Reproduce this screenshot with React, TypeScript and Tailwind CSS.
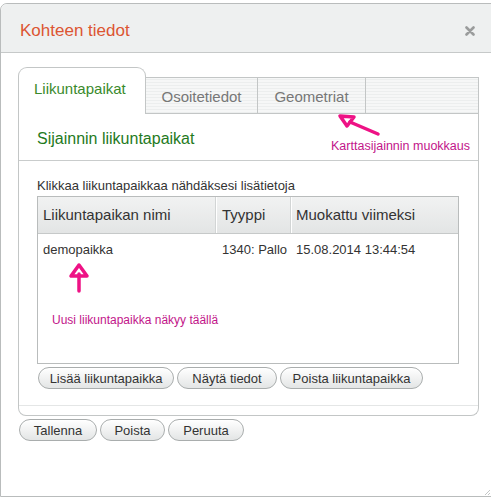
const FONT = "font-['Liberation_Sans',Arial,sans-serif]"

function PillButton({ label, width }: { label: string; width: string }) {
  return (
    <button
      className={`${width} h-[22px] rounded-full border border-[#a9adad] bg-[linear-gradient(#ffffff,#e3e5e5)] text-[13px] leading-none text-[#333] shadow-[inset_0_1px_0_#fff]`}
    >
      {label}
    </button>
  )
}

/** Merkintänuolet kuvakaappauksen päällä (käsin piirretty, magenta). */
function UpArrow() {
  return (
    <svg width="26" height="32" viewBox="0 0 26 32" className="absolute left-[28px] top-[65px]" aria-hidden="true">
      <path d="M13 29 L13 12" stroke="#ee1285" strokeWidth="3.5" strokeLinecap="round" />
      <path d="M13 3 L5 14 L21 14 Z" fill="none" stroke="#ee1285" strokeWidth="3.5" strokeLinejoin="round" />
    </svg>
  )
}

function TabArrow() {
  return (
    <svg width="48" height="26" viewBox="0 0 48 26" className="absolute left-[334px] top-[112px]" aria-hidden="true">
      <path d="M44 22 L16 10" stroke="#ee1285" strokeWidth="3.5" strokeLinecap="round" />
      <path d="M6 4 L20 5 L13 14 Z" fill="none" stroke="#ee1285" strokeWidth="3.5" strokeLinejoin="round" />
    </svg>
  )
}

export default function App() {
  return (
    <div className={`relative h-[497px] w-[491px] overflow-hidden bg-white ${FONT}`}>
      <div className="mt-[3px] h-[494px] w-[500px] rounded-tl-[7px] border border-[#b9bcbc] bg-white">
        {/* Otsikkopalkki */}
        <div className="flex h-[49px] w-[491px] items-center justify-between rounded-tl-[7px] border-b border-[#c6c9c9] bg-[#eef0f0] pl-[19px] pr-[17px] pt-[5px]">
          <span className="text-[17px] text-[#dc5532]">Kohteen tiedot</span>
          <svg width="10" height="10" viewBox="0 0 10 10" aria-hidden="true">
            <path d="M1.5 1.5 L8.5 8.5 M8.5 1.5 L1.5 8.5" stroke="#9a9c9c" strokeWidth="2.6" strokeLinecap="round" />
          </svg>
        </div>

        <div className="pl-[17px] pt-[14px]">
          <div className="w-[461px]">
            {/* Välilehdet */}
            <div className="flex items-end">
              <div className="flex h-[47px] w-[128px] items-center rounded-t-[9px] border-x border-t border-[#c3c6c6] bg-white pb-[4px] pl-[15px] text-[15px] text-[#3a8a2c]">
                Liikuntapaikat
              </div>
              <div className="flex h-[37px] flex-1 border-y border-r border-[#c3c6c6] bg-[repeating-linear-gradient(0deg,#eceeee_0px,#eceeee_1px,#f6f7f7_1px,#f6f7f7_3px)] text-[15px] text-[#777]">
                <div className="flex w-[112px] items-center justify-center border-r border-[#c3c6c6] pt-[3px]">Osoitetiedot</div>
                <div className="flex w-[108px] items-center justify-center border-r border-[#c3c6c6] pt-[3px]">Geometriat</div>
                <div className="flex-1" />
              </div>
            </div>

            {/* Sisältö */}
            <div className="rounded-b-[8px] border-x border-b border-[#c3c6c6]">
              <div className="flex h-[47px] items-center justify-between border-b border-[#c9cccc] pl-[18px] pr-[8px] pt-[3px]">
                <span className="text-[16px] text-[#1f7a22]">Sijainnin liikuntapaikat</span>
                <span className="mt-[16px] text-[12.5px] text-[#c2158a]">Karttasijainnin muokkaus</span>
              </div>

              <div className="pl-[18px] pt-[17px]">
                <div className="text-[13px] leading-[16px] text-[#333]">Klikkaa liikuntapaikkaa nähdäksesi lisätietoja</div>

                <div className="relative mt-[2px] h-[168px] w-[422px] border border-[#b9bcbc]">
                  <div className="grid h-[37px] grid-cols-[178px_75px_1fr] border-b border-[#c6c9c9] bg-[linear-gradient(#f1f2f2,#e3e5e5)] text-[15px] text-[#333]">
                    <div className="flex items-center border-r border-[#d2d5d5] pl-[5px] shadow-[1px_0_0_#fff]">Liikuntapaikan nimi</div>
                    <div className="flex items-center border-r border-[#d2d5d5] pl-[6px] shadow-[1px_0_0_#fff]">Tyyppi</div>
                    <div className="flex items-center pl-[5px]">Muokattu viimeksi</div>
                  </div>
                  <div className="grid grid-cols-[178px_75px_1fr] pt-[8px] text-[13px] leading-[16px] text-[#333]">
                    <div className="pl-[5px]">demopaikka</div>
                    <div className="pl-[6px]">1340: Pallo</div>
                    <div className="pl-[5px]">15.08.2014 13:44:54</div>
                  </div>
                  <UpArrow />
                  <div className="absolute left-[14px] top-[114px] text-[12px] text-[#c2158a]">Uusi liikuntapaikka näkyy täällä</div>
                </div>

                <div className="mt-[3px] flex gap-[3px] pl-px">
                  <PillButton label="Lisää liikuntapaikka" width="w-[136px]" />
                  <PillButton label="Näytä tiedot" width="w-[100px]" />
                  <PillButton label="Poista liikuntapaikka" width="w-[143px]" />
                </div>
              </div>

              <div className="mt-[16px] h-[10px] border-t border-[#e4e6e6]" />
            </div>
          </div>

          <div className="mt-[3px] flex gap-[3px] pl-px">
            <PillButton label="Tallenna" width="w-[78px]" />
            <PillButton label="Poista" width="w-[65px]" />
            <PillButton label="Peruuta" width="w-[76px]" />
          </div>
        </div>
      </div>

      <TabArrow />

      {/* Koon muutoskahva */}
      <svg width="8" height="8" viewBox="0 0 8 8" className="absolute bottom-[1px] right-0" aria-hidden="true">
        <path d="M7 2 L2 7 M7 5 L5 7" stroke="#c4c7c7" strokeWidth="1" />
      </svg>
    </div>
  )
}
